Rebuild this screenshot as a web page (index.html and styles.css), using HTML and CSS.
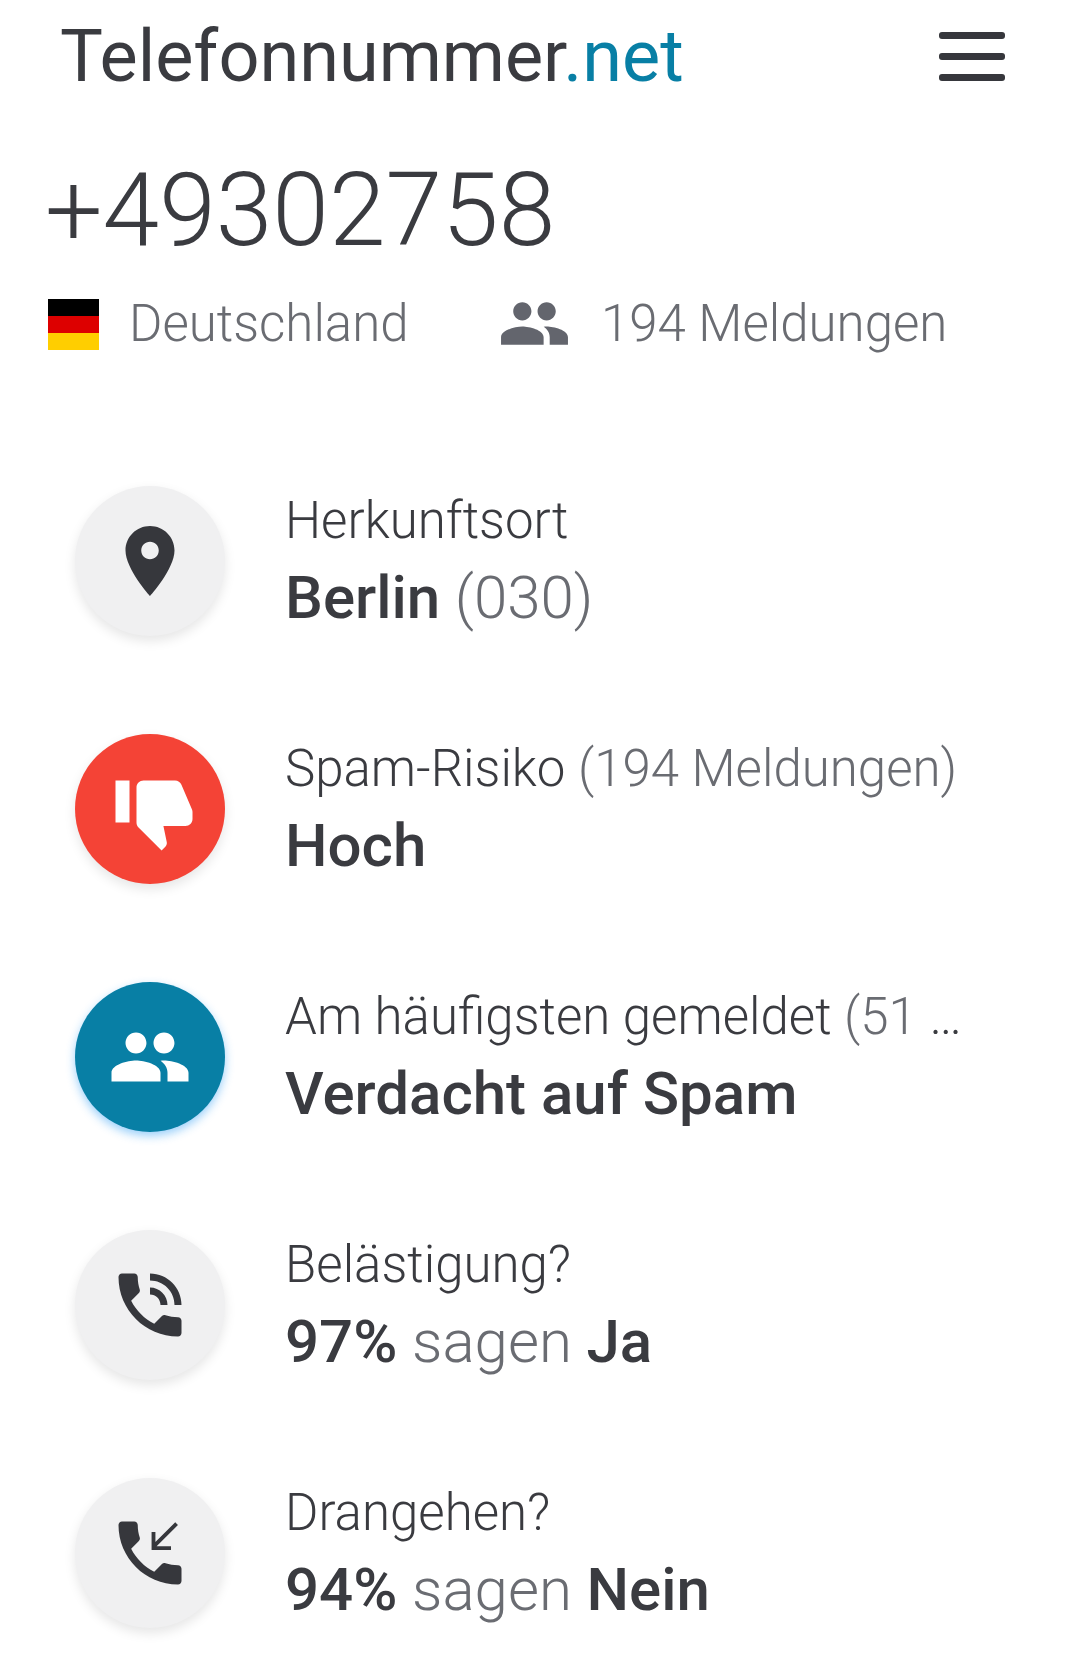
FILE: index.html
```html
<!DOCTYPE html>
<html lang="de">
<head>
    <meta charset="UTF-8">
    <meta name="viewport" content="width=device-width, initial-scale=1.0">
    <title>+49302758</title>
    <link rel="stylesheet" href="styles.css">
</head>
<body>
    <header class="topbar">
        <div class="logo">Telefonnummer<span class="logo-tld">.net</span></div>
        <div class="menu-btn"><span></span><span></span><span></span></div>
    </header>

    <h1 class="number">+49302758</h1>

    <div class="meta">
        <div class="flag"><span class="flag-black"></span><span class="flag-red"></span><span class="flag-gold"></span></div>
        <span class="meta-country">Deutschland</span>
        <svg class="meta-icon" viewBox="0 0 24 24"><path d="M16 11c1.66 0 2.99-1.34 2.99-3S17.66 5 16 5c-1.66 0-3 1.34-3 3s1.34 3 3 3zm-8 0c1.66 0 2.99-1.34 2.99-3S9.66 5 8 5C6.34 5 5 6.34 5 8s1.34 3 3 3zm0 2c-2.33 0-7 1.17-7 3.5V19h14v-2.5c0-2.33-4.67-3.5-7-3.5zm8 0c-.29 0-.62.02-.97.05 1.16.84 1.97 1.97 1.97 3.45V19h6v-2.5c0-2.33-4.67-3.5-7-3.5z"/></svg>
        <span class="meta-count">194 Meldungen</span>
    </div>

    <ul class="facts">
        <li class="fact">
            <div class="circle">
                <svg viewBox="0 0 24 24"><path d="M12 2C8.13 2 5 5.13 5 9c0 5.25 7 13 7 13s7-7.75 7-13c0-3.87-3.13-7-7-7zm0 9.5c-1.38 0-2.5-1.12-2.5-2.5s1.12-2.5 2.5-2.5 2.5 1.12 2.5 2.5-1.12 2.5-2.5 2.5z"/></svg>
            </div>
            <div class="fact-text">
                <div class="fact-label">Herkunftsort</div>
                <div class="fact-value"><b>Berlin</b> (030)</div>
            </div>
        </li>
        <li class="fact">
            <div class="circle circle-red">
                <svg class="thumb" viewBox="0 0 24 24"><path d="M15 3H6c-.83 0-1.54.5-1.84 1.22l-3.02 7.05c-.09.23-.14.47-.14.73v2c0 1.1.9 2 2 2h6.31l-.95 4.57-.03.32c0 .41.17.79.44 1.06L9.83 23l6.59-6.59c.36-.36.58-.86.58-1.41V5c0-1.1-.9-2-2-2zm4 0v12h4V3h-4z"/></svg>
            </div>
            <div class="fact-text">
                <div class="fact-label">Spam-Risiko <span class="muted">(194 Meldungen)</span></div>
                <div class="fact-value"><b>Hoch</b></div>
            </div>
        </li>
        <li class="fact">
            <div class="circle circle-blue">
                <svg viewBox="0 0 24 24"><path d="M16 11c1.66 0 2.99-1.34 2.99-3S17.66 5 16 5c-1.66 0-3 1.34-3 3s1.34 3 3 3zm-8 0c1.66 0 2.99-1.34 2.99-3S9.66 5 8 5C6.34 5 5 6.34 5 8s1.34 3 3 3zm0 2c-2.33 0-7 1.17-7 3.5V19h14v-2.5c0-2.33-4.67-3.5-7-3.5zm8 0c-.29 0-.62.02-.97.05 1.16.84 1.97 1.97 1.97 3.45V19h6v-2.5c0-2.33-4.67-3.5-7-3.5z"/></svg>
            </div>
            <div class="fact-text">
                <div class="fact-label">Am häufigsten gemeldet <span class="muted">(51 Meldungen)</span></div>
                <div class="fact-value"><b>Verdacht auf Spam</b></div>
            </div>
        </li>
        <li class="fact">
            <div class="circle">
                <svg viewBox="0 0 24 24"><path d="M20 15.5c-1.25 0-2.45-.2-3.57-.57-.35-.11-.74-.03-1.02.24l-2.2 2.2c-2.83-1.44-5.15-3.75-6.59-6.59l2.2-2.21c.28-.26.36-.65.25-1C8.7 6.45 8.5 5.25 8.5 4c0-.55-.45-1-1-1H4c-.55 0-1 .45-1 1 0 9.39 7.61 17 17 17 .55 0 1-.45 1-1v-3.5c0-.55-.45-1-1-1zM19 12h2c0-4.97-4.03-9-9-9v2c3.87 0 7 3.13 7 7zm-4 0h2c0-2.76-2.24-5-5-5v2c1.66 0 3 1.34 3 3z"/></svg>
            </div>
            <div class="fact-text">
                <div class="fact-label">Belästigung?</div>
                <div class="fact-value"><b>97%</b> sagen <b>Ja</b></div>
            </div>
        </li>
        <li class="fact">
            <div class="circle">
                <svg viewBox="0 0 24 24"><path d="M20 15.5c-1.25 0-2.45-.2-3.57-.57-.35-.11-.74-.03-1.02.24l-2.2 2.2c-2.83-1.44-5.15-3.75-6.59-6.59l2.2-2.21c.28-.26.36-.65.25-1C8.7 6.45 8.5 5.25 8.5 4c0-.55-.45-1-1-1H4c-.55 0-1 .45-1 1 0 9.39 7.61 17 17 17 .55 0 1-.45 1-1v-3.5c0-.55-.45-1-1-1z"/><path d="M19.6 3.6L13 10.2M13 6v4.6h5" fill="none" stroke="#36373c" stroke-width="1.1"/></svg>
            </div>
            <div class="fact-text">
                <div class="fact-label">Drangehen?</div>
                <div class="fact-value"><b>94%</b> sagen <b>Nein</b></div>
            </div>
        </li>
    </ul>
</body>
</html>
```

FILE: styles.css
```css
body {
    font-family: 'Roboto', sans-serif;
    font-weight: 300;
    color: #3a3b40;
    background-color: #fff;
    margin: 0;
    height: 1655px;
    overflow: hidden;
}

/* Kopfzeile */
.topbar {
    display: flex;
    justify-content: space-between;
    align-items: center;
    height: 112px;
    padding: 0 75px 0 60px;
}

.logo {
    font-size: 72px;
    font-weight: 400;
    line-height: 112px;
    margin-top: 2px;
}

.logo-tld {
    color: #087fa5;
}

.menu-btn {
    display: flex;
    flex-direction: column;
    gap: 14px;
    width: 66px;
}

.menu-btn span {
    height: 7px;
    border-radius: 3px;
    background-color: #36373c;
}

/* Nummer */
.number {
    font-size: 102px;
    font-weight: 300;
    line-height: 120px;
    margin: 38px 0 0 45px;
}

/* Land und Meldungen */
.meta {
    display: flex;
    align-items: center;
    margin: 27px 0 0 48px;
    height: 52px;
    font-size: 51px;
    color: #6a6c72;
}

.flag {
    display: flex;
    flex-direction: column;
    width: 51px;
    height: 51px;
    margin-top: 2px;
}

.flag span {
    flex: 1;
}

.flag-black { background-color: #000; }
.flag-red { background-color: #dd0000; }
.flag-gold { background-color: #ffce00; }

.meta-country {
    margin-left: 30px;
    width: 370px;
}

.meta-icon {
    width: 73px;
    height: 73px;
    fill: #63656d;
    margin-left: -1px;
}

.meta-count {
    margin-left: 30px;
}

/* Liste */
.facts {
    list-style: none;
    margin: 137px 0 0;
    padding: 0 0 0 75px;
    display: flex;
    flex-direction: column;
    gap: 98px;
}

.fact {
    display: flex;
    align-items: center;
    height: 150px;
}

.circle {
    flex: none;
    display: flex;
    justify-content: center;
    align-items: center;
    width: 150px;
    height: 150px;
    border-radius: 50%;
    background-color: #f0f0f1;
    box-shadow: 0 5px 12px rgba(0, 0, 0, 0.1);
}

.circle svg {
    width: 84px;
    height: 84px;
    fill: #36373c;
}

.circle .thumb {
    transform: translate(4px, 3px) scaleX(-1);
}

.circle-red {
    background-color: #f44336;
}

.circle-blue {
    background-color: #087fa5;
    box-shadow: 0 4px 10px rgba(33, 150, 243, 0.45);
}

.circle-red svg,
.circle-blue svg {
    fill: #fff;
}

.fact-text {
    margin-left: 60px;
    padding-bottom: 5px;
    width: 681px;
}

.fact-label {
    font-size: 51px;
    line-height: 78px;
    white-space: nowrap;
    overflow: hidden;
    text-overflow: ellipsis;
}

.fact-value {
    font-size: 60px;
    line-height: 76px;
    color: #6a6c72;
}

.fact-value b {
    font-weight: 500;
    color: #3a3b40;
}

.muted {
    color: #6a6c72;
}
```
